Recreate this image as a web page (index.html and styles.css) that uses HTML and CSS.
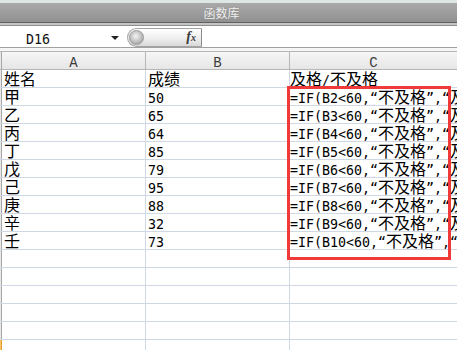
FILE: index.html
```html
<!DOCTYPE html>
<html lang="zh-CN">
<head>
<meta charset="utf-8">
<title>函数库</title>
<link rel="stylesheet" href="styles.css">
</head>
<body>
<div class="window">
  <div class="titlebar"><span class="title">函数库</span></div>
  <div class="band"></div>
  <div class="fbar">
    <div class="namebox"><span class="name">D16</span><span class="arrow"></span></div>
    <div class="fbtn"><span class="knob"></span><span class="fx"><i>f</i><i class="x">x</i></span></div>
    <div class="finput"></div>
  </div>
  <div class="gap"></div>
  <div class="sheet">
    <div class="row head">
      <div class="rh"></div>
      <div class="cell a"><span class="l">A</span></div>
      <div class="cell b"><span class="l">B</span></div>
      <div class="cell c"><span class="l">C</span></div>
    </div>
    <div class="row"><div class="rh"></div><div class="cell a">姓名</div><div class="cell b">成绩</div><div class="cell c">及格<span class="l">/</span>不及格</div></div>
    <div class="row"><div class="rh"></div><div class="cell a">甲</div><div class="cell b"><span class="l">50</span></div><div class="cell c"><span class="l">=IF(B2&lt;60,“</span>不及格<span class="l">”,“</span>及格<span class="l">”)</span></div></div>
    <div class="row"><div class="rh"></div><div class="cell a">乙</div><div class="cell b"><span class="l">65</span></div><div class="cell c"><span class="l">=IF(B3&lt;60,“</span>不及格<span class="l">”,“</span>及格<span class="l">”)</span></div></div>
    <div class="row"><div class="rh"></div><div class="cell a">丙</div><div class="cell b"><span class="l">64</span></div><div class="cell c"><span class="l">=IF(B4&lt;60,“</span>不及格<span class="l">”,“</span>及格<span class="l">”)</span></div></div>
    <div class="row"><div class="rh"></div><div class="cell a">丁</div><div class="cell b"><span class="l">85</span></div><div class="cell c"><span class="l">=IF(B5&lt;60,“</span>不及格<span class="l">”,“</span>及格<span class="l">”)</span></div></div>
    <div class="row"><div class="rh"></div><div class="cell a">戊</div><div class="cell b"><span class="l">79</span></div><div class="cell c"><span class="l">=IF(B6&lt;60,“</span>不及格<span class="l">”,“</span>及格<span class="l">”)</span></div></div>
    <div class="row"><div class="rh"></div><div class="cell a">己</div><div class="cell b"><span class="l">95</span></div><div class="cell c"><span class="l">=IF(B7&lt;60,“</span>不及格<span class="l">”,“</span>及格<span class="l">”)</span></div></div>
    <div class="row"><div class="rh"></div><div class="cell a">庚</div><div class="cell b"><span class="l">88</span></div><div class="cell c"><span class="l">=IF(B8&lt;60,“</span>不及格<span class="l">”,“</span>及格<span class="l">”)</span></div></div>
    <div class="row"><div class="rh"></div><div class="cell a">辛</div><div class="cell b"><span class="l">32</span></div><div class="cell c"><span class="l">=IF(B9&lt;60,“</span>不及格<span class="l">”,“</span>及格<span class="l">”)</span></div></div>
    <div class="row"><div class="rh"></div><div class="cell a">壬</div><div class="cell b"><span class="l">73</span></div><div class="cell c"><span class="l">=IF(B10&lt;60,“</span>不及格<span class="l">”,“</span>及格<span class="l">”)</span></div></div>
    <div class="row"><div class="rh"></div><div class="cell a"></div><div class="cell b"></div><div class="cell c"></div></div>
    <div class="row"><div class="rh"></div><div class="cell a"></div><div class="cell b"></div><div class="cell c"></div></div>
    <div class="row"><div class="rh"></div><div class="cell a"></div><div class="cell b"></div><div class="cell c"></div></div>
    <div class="row"><div class="rh"></div><div class="cell a"></div><div class="cell b"></div><div class="cell c"></div></div>
    <div class="row"><div class="rh"></div><div class="cell a"></div><div class="cell b"></div><div class="cell c"></div></div>
    <div class="row"><div class="rh sel"></div><div class="cell a"></div><div class="cell b"></div><div class="cell c"></div></div>
    <div class="highlight"></div>
  </div>
</div>
</body>
</html>
```

FILE: styles.css
```css
html, body {
  margin: 0;
  padding: 0;
  width: 457px;
  height: 350px;
  overflow: hidden;
  background: #ffffff;
}

.window {
  width: 457px;
  font-family: "Noto Sans CJK SC", sans-serif;
}

.titlebar {
  height: 19px;
  border-top: 3px solid #dfe6e6;
  background: linear-gradient(#aaaaaa, #909090);
  display: flex;
  align-items: center;
  justify-content: center;
  padding-right: 14px;
}

.title {
  font-size: 12px;
  line-height: 14px;
  color: #f2f2f2;
  text-shadow: 0 0 1px #7a7a7a;
}

.band {
  height: 2px;
  border-top: 1px solid #626262;
  background: #c4c4c4;
  border-bottom: 1px solid #8e8e8e;
}

.fbar {
  display: flex;
  height: 21px;
  border-bottom: 1px solid #a0a0a0;
  background: #ffffff;
}

.namebox {
  width: 124px;
  display: flex;
  align-items: flex-end;
}

.name {
  margin-left: 26px;
  font-family: "DejaVu Sans Mono", monospace;
  font-size: 13.3px;
  line-height: 15px;
  color: #111;
}

.arrow {
  align-self: center;
  margin-top: 3px;
  margin-left: auto;
  margin-right: 5px;
  width: 0;
  height: 0;
  border-left: 4px solid transparent;
  border-right: 4px solid transparent;
  border-top: 4px solid #222;
}

.fbtn {
  margin-left: 3px;
  width: 75px;
  height: 19px;
  margin-top: 2px;
  border: 1px solid #a4a4a4;
  border-right: 1px solid #8a8a8a;
  border-radius: 10px 0 0 10px;
  background: linear-gradient(#ffffff, #f0f0f0 50%, #d9d9d9);
  display: flex;
  align-items: center;
  box-sizing: border-box;
}

.knob {
  width: 15px;
  height: 15px;
  margin-left: 1px;
  border-radius: 50%;
  background: radial-gradient(circle at 45% 40%, #f4f4f4 0, #c8c8c8 45%, #8e8e8e 100%);
  border: 1px solid #9a9a9a;
  box-sizing: border-box;
}

.fx {
  margin-left: auto;
  margin-right: 5px;
  font-family: "Liberation Serif", serif;
  font-size: 14px;
  font-weight: bold;
  color: #3a3a3a;
  line-height: 14px;
}

.fx .x {
  font-size: 10px;
}

.finput {
  flex: 1;
  background: #ffffff;
}

.gap {
  height: 3px;
  background: #f6f6f6;
}

.sheet {
  position: relative;
}

.row {
  display: flex;
  height: 17px;
  border-bottom: 1px solid #d0d7e5;
}

.row.head {
  border-top: 1px solid #b6b6b6;
  border-bottom: 1px solid #b6b6b6;
  background: linear-gradient(#f6f6f6, #e6e6e6);
}

.rh {
  width: 1px;
  flex: none;
  background: #e8e8e8;
  border-right: 1px solid #a8a8a8;
}

.rh.sel {
  background: #f7c56a;
  border-right-color: #e99a2c;
}

.cell {
  font-size: 16px;
  line-height: 15px;
  height: 17px;
  padding-top: 1px;
  color: #000;
  white-space: nowrap;
  padding-left: 2px;
  box-sizing: border-box;
}

.l {
  font-family: "DejaVu Sans Mono", monospace;
  font-size: 13.3px;
}

.cell.a, .cell.b {
  width: 144px;
  flex: none;
  border-right: 1px solid #d0d7e5;
}

.cell.c {
  flex: 1;
  padding-left: 0;
}

.row.head .cell {
  text-align: center;
  padding-left: 0;
  color: #3c3c3c;
  border-right-color: #b6b6b6;
}

.row.head .l {
  font-family: "Liberation Mono", monospace;
  font-size: 14px;
}

.highlight {
  position: absolute;
  left: 287px;
  top: 35px;
  width: 164px;
  height: 174px;
  border: 3px solid #f03a3a;
  box-sizing: border-box;
}
```
